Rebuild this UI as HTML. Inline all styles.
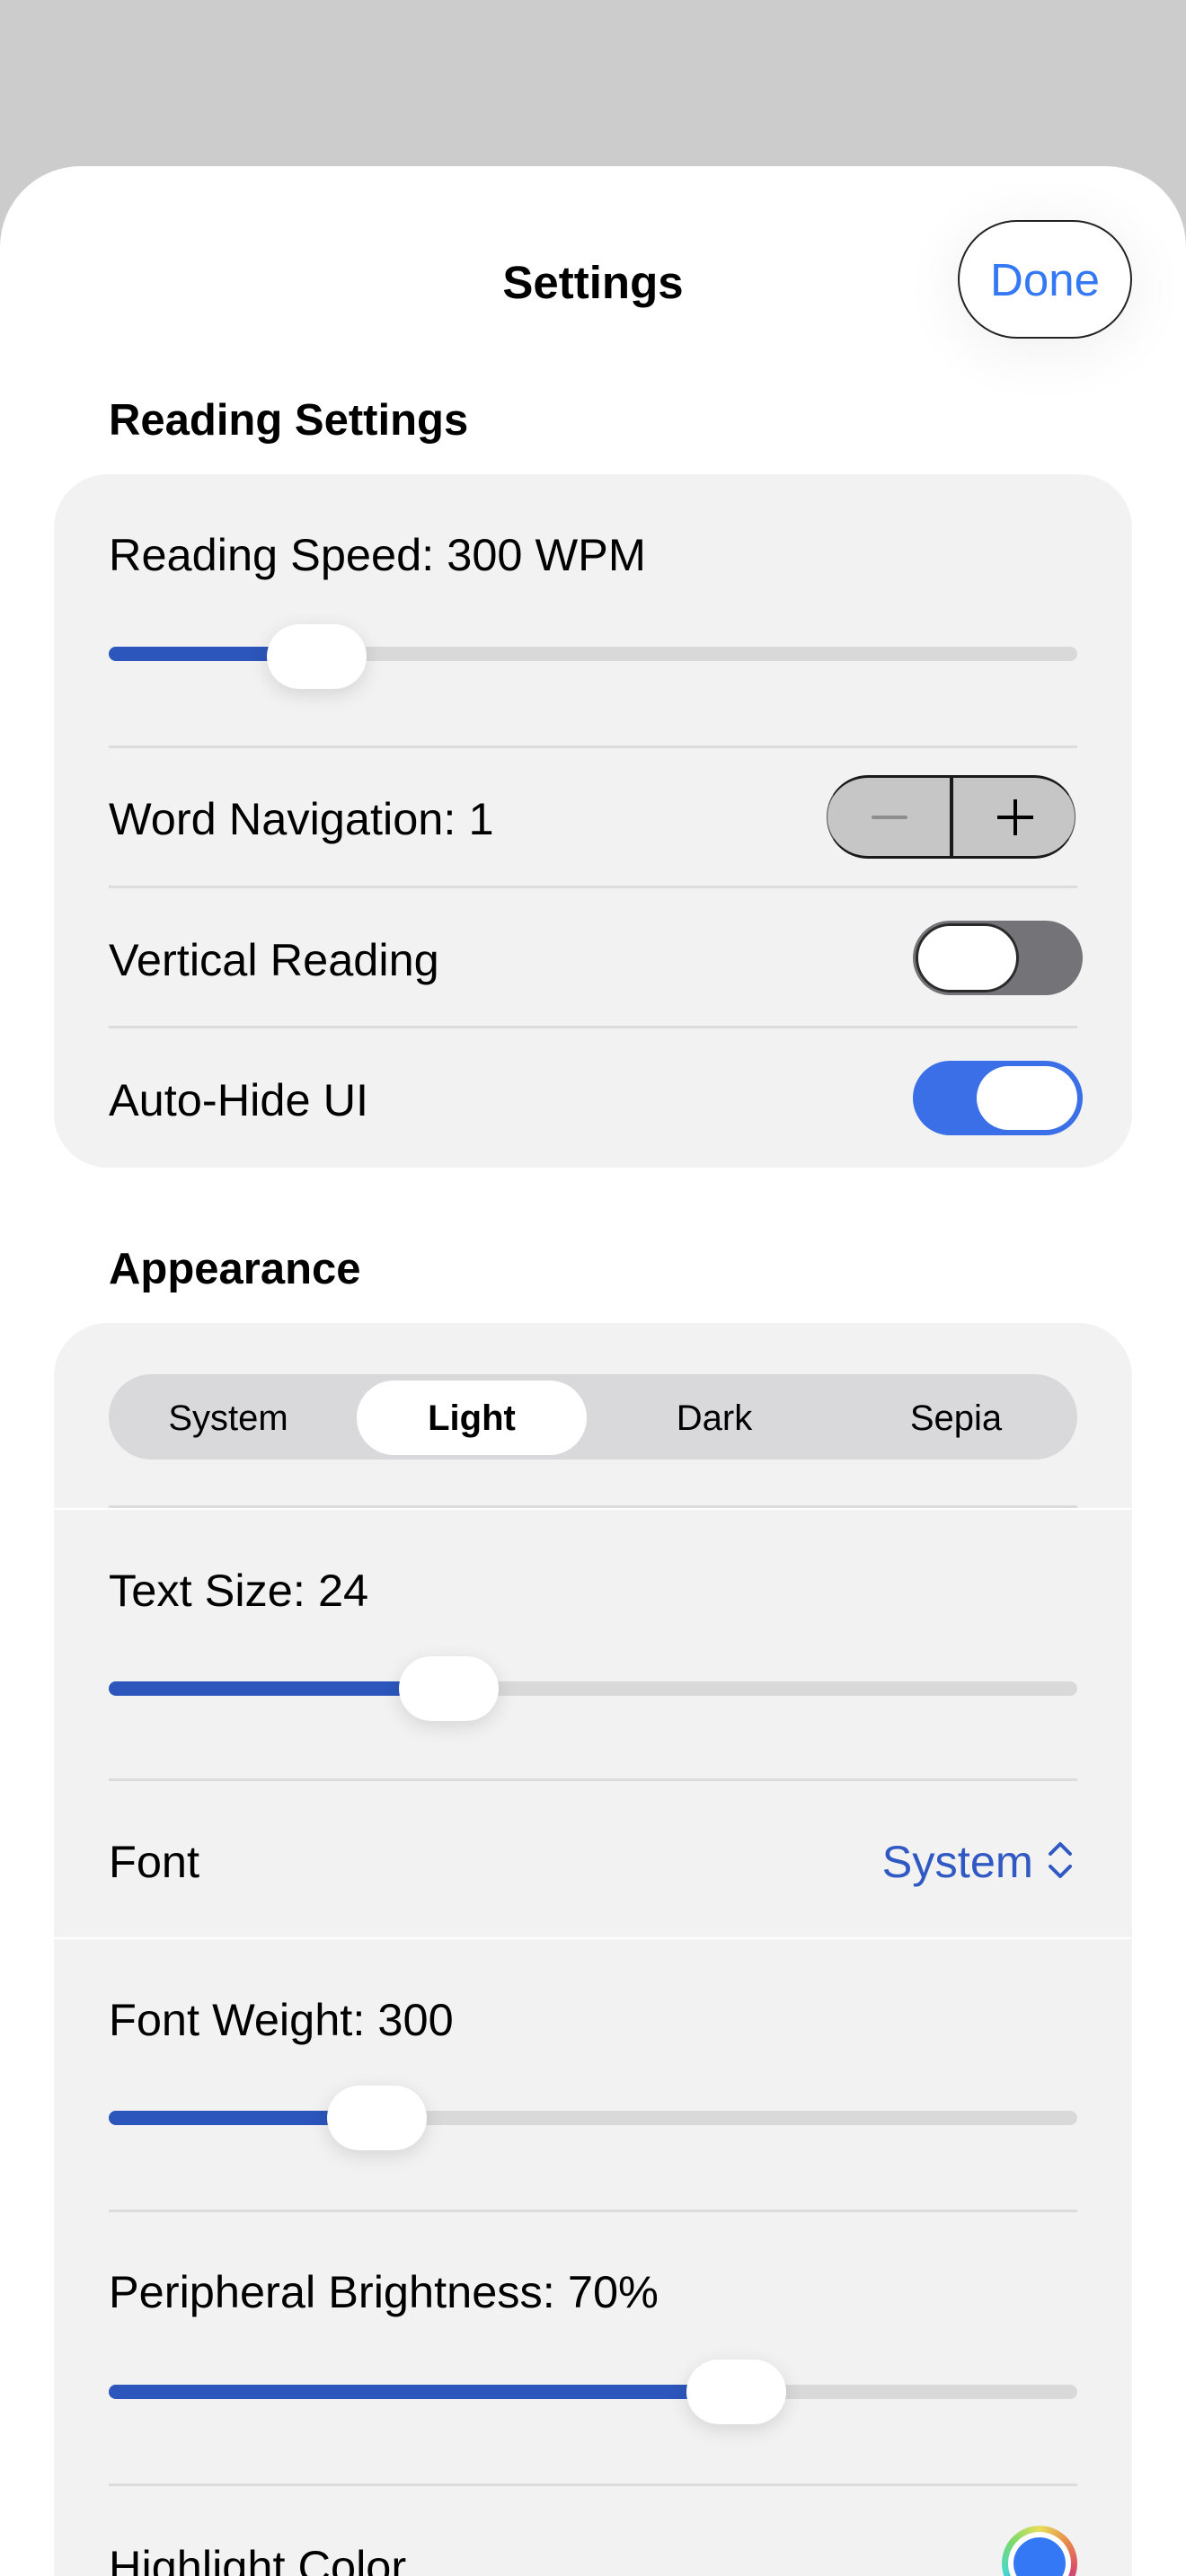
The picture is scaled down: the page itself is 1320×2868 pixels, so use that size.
<!DOCTYPE html>
<html><head><meta charset="utf-8"><style>
*{margin:0;padding:0;box-sizing:border-box}
html,body{width:1320px;height:2868px;overflow:hidden}
body{background:#cccccc;position:relative;font-family:"Liberation Sans",sans-serif;color:#000}
.a{position:absolute}
.sheet{left:0;top:185px;width:1320px;height:2683px;background:#fff;border-radius:90px 90px 0 0}
.card{background:#f2f2f2;border-radius:60px}
.lbl{font-size:50.5px;line-height:60px;left:121px;margin-top:2px}
.h{font-size:49px;font-weight:bold;left:121px;line-height:56px}
.div{left:121px;width:1078px;height:3px;background:#dcdcdc}
.track{left:121px;width:1078px;height:16px;border-radius:8px;background:#d9d9d9;overflow:hidden}
.fill{position:absolute;left:0;top:0;height:16px;background:#2c56bb}
.thumb{width:111px;height:72px;border-radius:36px;background:#fff;box-shadow:0 6px 22px rgba(0,0,0,0.12)}
.seg{font-size:40px;line-height:95px;text-align:center;width:250px;margin-top:2px}
</style></head><body>
<div class="a sheet"></div>
<div class="a" style="left:0;top:285px;width:1320px;text-align:center;font-size:51px;font-weight:bold;line-height:60px">Settings</div>
<div class="a" style="left:1066px;top:245px;width:194px;height:132px;border:2px solid #222;border-radius:66px;background:#fff;box-shadow:0 10px 70px rgba(0,0,0,0.07);text-align:center;line-height:130px;font-size:51px;color:#3478f6">Done</div>
<div class="a h" style="top:440px">Reading Settings</div>
<div class="a card" style="left:60px;top:528px;width:1200px;height:772px"></div>
<div class="a lbl" style="top:586px">Reading Speed: 300 WPM</div>
<div class="a track" style="top:720px"><div class="fill" style="width:240px"></div></div>
<div class="a thumb" style="left:297px;top:695px"></div>
<div class="a div" style="top:830px"></div>
<div class="a lbl" style="top:880px">Word Navigation: 1</div>
<div class="a" style="left:920px;top:863px;width:277px;height:93px;background:#c6c6c6;border-radius:46px;border-top:3px solid #1a1a1a;border-bottom:3px solid #1a1a1a;border-left:1px solid #555;border-right:1px solid #555"></div>
<div class="a" style="left:1057px;top:863px;width:4px;height:93px;background:#1a1a1a"></div>
<div class="a" style="left:970px;top:908px;width:40px;height:4px;background:#8e8e8e;border-radius:2px"></div>
<div class="a" style="left:1110px;top:908px;width:40px;height:4px;background:#000"></div>
<div class="a" style="left:1128px;top:890px;width:4px;height:40px;background:#000"></div>
<div class="a div" style="top:986px"></div>
<div class="a lbl" style="top:1037px">Vertical Reading</div>
<div class="a" style="left:1016px;top:1025px;width:189px;height:83px;border-radius:42px;background:#747478"></div>
<div class="a" style="left:1019px;top:1028px;width:115px;height:77px;border-radius:39px;background:#fff;border:3px solid #2a2a2a"></div>
<div class="a div" style="top:1142px"></div>
<div class="a lbl" style="top:1193px">Auto-Hide UI</div>
<div class="a" style="left:1016px;top:1181px;width:189px;height:83px;border-radius:42px;background:#3a6fe8"></div>
<div class="a" style="left:1087px;top:1187px;width:112px;height:71px;border-radius:36px;background:#fff"></div>
<div class="a h" style="top:1385px">Appearance</div>
<div class="a card" style="left:60px;top:1473px;width:1200px;height:1395px;border-radius:60px 60px 0 0"></div>
<div class="a" style="left:121px;top:1530px;width:1078px;height:95px;background:#d9d9dc;border-radius:48px"></div>
<div class="a" style="left:397px;top:1537px;width:256px;height:83px;background:#fff;border-radius:42px"></div>
<div class="a seg" style="left:129px;top:1530px">System</div>
<div class="a seg" style="left:400px;top:1530px;font-weight:bold">Light</div>
<div class="a seg" style="left:670px;top:1530px">Dark</div>
<div class="a seg" style="left:939px;top:1530px">Sepia</div>
<div class="a" style="left:60px;top:1679px;width:1200px;height:2px;background:#fff"></div>
<div class="a div" style="top:1676px"></div>
<div class="a lbl" style="top:1739px">Text Size: 24</div>
<div class="a track" style="top:1872px"><div class="fill" style="width:390px"></div></div>
<div class="a thumb" style="left:444px;top:1844px"></div>
<div class="a div" style="top:1980px"></div>
<div class="a lbl" style="top:2041px">Font</div>
<div class="a" style="left:960px;top:2043px;width:190px;font-size:50.5px;line-height:60px;color:#3059c4;text-align:right">System</div>
<svg class="a" style="left:1163px;top:2048px" width="34" height="46" viewBox="0 0 34 46"><path d="M6 16 L17 5 L28 16 M6 30 L17 41 L28 30" stroke="#3059c4" stroke-width="4" fill="none" stroke-linecap="round" stroke-linejoin="round"/></svg>
<div class="a" style="left:60px;top:2157px;width:1200px;height:2px;background:#fff"></div>
<div class="a lbl" style="top:2217px">Font Weight: 300</div>
<div class="a track" style="top:2350px"><div class="fill" style="width:310px"></div></div>
<div class="a thumb" style="left:364px;top:2322px"></div>
<div class="a div" style="top:2460px"></div>
<div class="a lbl" style="top:2520px">Peripheral Brightness: 70%</div>
<div class="a track" style="top:2655px"><div class="fill" style="width:710px"></div></div>
<div class="a thumb" style="left:764px;top:2627px"></div>
<div class="a div" style="top:2765px"></div>
<div class="a lbl" style="top:2826px">Highlight Color</div>
<div class="a" style="left:1115px;top:2812px;width:84px;height:84px;border-radius:50%;background:conic-gradient(#e7df5a,#e88a4a,#d94a6a,#8a5ad9,#4a8ae8,#4ad9c9,#7ad96a,#e7df5a)"></div>
<div class="a" style="left:1122px;top:2819px;width:70px;height:70px;border-radius:50%;background:#fff"></div>
<div class="a" style="left:1128px;top:2825px;width:58px;height:58px;border-radius:50%;background:#3478f6"></div>
</body></html>
